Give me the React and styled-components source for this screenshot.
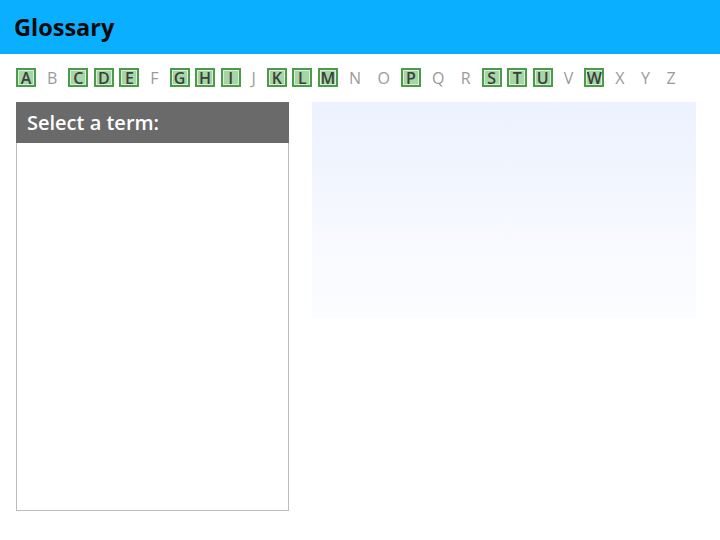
import React from 'react'
import styled, { createGlobalStyle } from 'styled-components'

const GlobalStyle = createGlobalStyle`
  body {
    margin: 0;
    background: #fff;
    font-family: 'Open Sans', 'Noto Sans', sans-serif;
  }
`

const TopBar = styled.header`
  height: 54px;
  display: flex;
  align-items: center;
  padding: 0 14px;
  background: #0aafff;
`

const Title = styled.h1`
  margin: 0;
  font-size: 23.5px;
  font-weight: 700;
  color: #0a0a0a;
`

const LetterBar = styled.nav`
  display: flex;
  align-items: center;
  gap: 5.5px;
  padding: 14px 16px 0;
  height: 19px;
`

const Letter = styled.span`
  height: 19px;
  box-sizing: border-box;
  display: flex;
  align-items: center;
  justify-content: center;
  font-size: 16px;
  line-height: 1;
  color: #9a9a9a;
  padding: 0 5.5px;
  cursor: default;
`

const LinkedLetter = styled(Letter)`
  width: 20px;
  padding: 0;
  font-weight: 600;
  color: #3a403a;
  background: #a6d5a6;
  border: 2px solid #4b9b4b;
  box-shadow: inset 0 0 0 1px #d8eed8;
  cursor: pointer;
`

const Content = styled.main`
  display: flex;
  align-items: flex-start;
  gap: 23px;
  padding: 15px 16px 0;
`

const TermPanel = styled.section`
  width: 273px;
  height: 409px;
  box-sizing: border-box;
  border: 1px solid #bdbdbd;
  background: #fff;
`

const PanelHeader = styled.div`
  height: 41px;
  margin: -1px -1px 0;
  display: flex;
  align-items: center;
  padding: 0 11px;
  background: #6a6a6a;
  color: #fff;
  font-size: 20px;
  font-weight: 600;
`

const Definition = styled.section`
  width: 384px;
  height: 216px;
  background: linear-gradient(to bottom, #ebf1fe 0%, #f7f9ff 60%, #fcfdff 100%);
`

const letters = 'ABCDEFGHIJKLMNOPQRSTUVWXYZ'.split('')
const linked = 'ACDEGHIKLMPSTUW'

export default function App() {
  return (
    <>
      <GlobalStyle />
      <TopBar>
        <Title>Glossary</Title>
      </TopBar>
      <LetterBar>
        {letters.map((l) =>
          linked.includes(l) ? (
            <LinkedLetter key={l}>{l}</LinkedLetter>
          ) : (
            <Letter key={l}>{l}</Letter>
          )
        )}
      </LetterBar>
      <Content>
        <TermPanel>
          <PanelHeader>Select a term:</PanelHeader>
        </TermPanel>
        <Definition />
      </Content>
    </>
  )
}
